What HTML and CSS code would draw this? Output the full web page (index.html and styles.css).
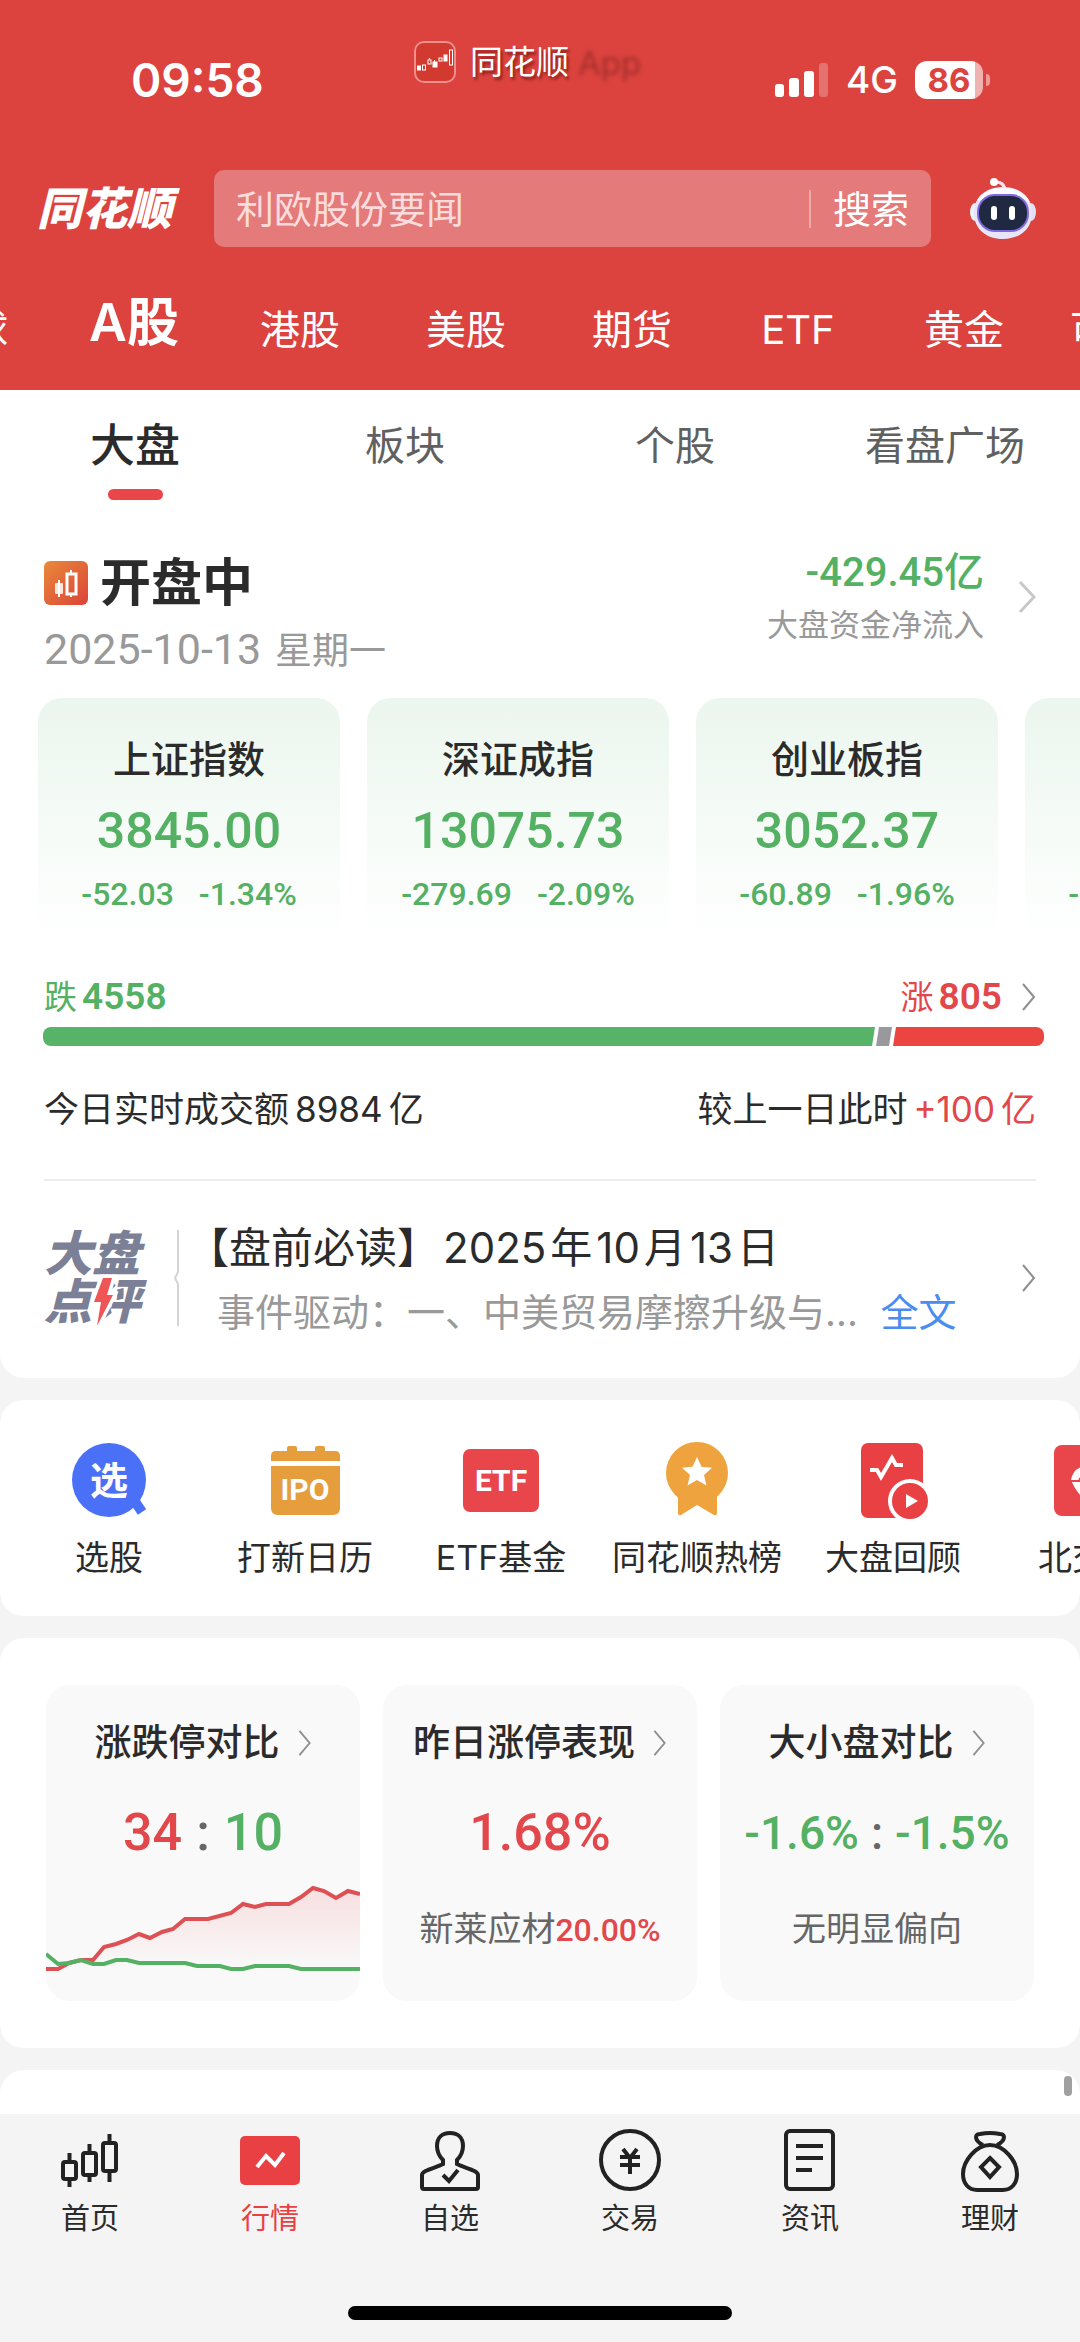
FILE: index.html
```html
<!DOCTYPE html>
<html lang="zh-CN">
<head>
    <meta charset="UTF-8">
    <meta name="viewport" content="width=device-width, initial-scale=1.0">
    <title>同花顺 行情</title>
    <link rel="stylesheet" href="styles.css">
</head>
<body>
<div class="app">
    <header class="header">
        <div class="statusbar">
            <span class="time">09:58</span>
            <div class="watermark">
                <svg width="42" height="42" viewBox="0 0 42 42">
                    <rect x="1" y="1" width="40" height="40" rx="9" fill="#d23a30" stroke="#ee8f8c" stroke-width="2"/>
                    <g fill="#fff" stroke="#fff" stroke-width="1">
                        <rect x="3.500" y="25" width="3" height="4"/>
                        <rect x="8.500" y="24" width="3" height="5" fill="none"/>
                        <rect x="14" y="19" width="3" height="4" fill="none"/>
                        <path d="M15.500 17v2M20.500 19v2"/>
                        <rect x="19" y="21" width="4" height="5"/>
                        <rect x="25" y="17" width="3" height="3" fill="none"/>
                        <rect x="30" y="14" width="3" height="6"/>
                        <rect x="35.500" y="9" width="3" height="15" fill="none"/>
                    </g>
                </svg>
                <span>同花顺<i class="faded">App</i></span>
            </div>
            <div class="status-icons">
                <svg width="54" height="36" viewBox="0 0 54 36" fill="#fff">
                    <rect x="0" y="22" width="9" height="13" rx="3"/>
                    <rect x="14" y="16" width="10" height="19" rx="3"/>
                    <rect x="29" y="9" width="10" height="26" rx="3"/>
                    <rect x="44" y="1" width="9" height="34" rx="3" opacity=".25"/>
                </svg>
                <span class="network">4G</span>
                <span class="battery">86</span>
            </div>
        </div>

        <div class="search-row">
            <span class="logo">同花顺</span>
            <form class="search">
                <input type="text" class="search-input" placeholder="利欧股份要闻" aria-label="搜索">
                <button type="button" class="search-btn">搜索</button>
            </form>
            <svg class="robot" width="66" height="62" viewBox="0 0 66 62">
                <path d="M24 4q10-1 11 8" fill="none" stroke="#f4e6f0" stroke-width="3"/>
                <circle cx="24" cy="4" r="4" fill="#fff"/>
                <ellipse cx="5" cy="34" rx="5" ry="9" fill="#eef0fa"/>
                <ellipse cx="61" cy="34" rx="5" ry="9" fill="#e3e0f5"/>
                <path d="M33 9C50 9 62 19 62 35S50 61 33 61 4 51 4 35 16 9 33 9z" fill="#e6e6f8"/>
                <path d="M33 10c14 0 24 6 27 15C50 15 16 15 6 25 9 16 19 10 33 10z" fill="#fafbff"/>
                <rect x="8" y="17" width="50" height="36" rx="17" fill="#1f2942" stroke="#8069dc" stroke-width="2"/>
                <rect x="21" y="28" width="6" height="14" rx="3" fill="#fff"/>
                <rect x="39" y="28" width="6" height="14" rx="3" fill="#fff"/>
            </svg>
        </div>

        <nav class="markets">
            <a href="#">全球</a>
            <a href="#" class="active">A股</a>
            <a href="#">港股</a>
            <a href="#">美股</a>
            <a href="#">期货</a>
            <a href="#">ETF</a>
            <a href="#">黄金</a>
            <a href="#">可转债</a>
        </nav>
    </header>

    <main class="content">
        <section class="panel overview">
            <nav class="subtabs">
                <a href="#" class="active">大盘</a>
                <a href="#">板块</a>
                <a href="#">个股</a>
                <a href="#">看盘广场</a>
            </nav>

            <div class="market-state">
                <div class="state-left">
                    <h1>
                        <svg width="44" height="44" viewBox="0 0 44 44">
                            <defs>
                                <linearGradient id="orange" x1="0" y1="0" x2="1" y2="1">
                                    <stop offset="0" stop-color="#e88a3a"/>
                                    <stop offset="1" stop-color="#dc4338"/>
                                </linearGradient>
                            </defs>
                            <rect width="44" height="44" rx="6" fill="url(#orange)"/>
                            <rect x="11" y="22" width="8" height="11" rx="1" fill="#fde6dc"/>
                            <path d="M15 19v17M27 9v3M27 33v3" stroke="#fff" stroke-width="2"/>
                            <rect x="23" y="13" width="9" height="20" fill="none" stroke="#fff" stroke-width="3"/>
                        </svg>
                        开盘中
                    </h1>
                    <p class="date"><span class="num">2025-10-13</span><span>星期一</span></p>
                </div>
                <a href="#" class="inflow">
                    <span>
                        <b class="num">-429.45亿</b>
                        <small>大盘资金净流入</small>
                    </span>
                    <svg width="18" height="34" viewBox="0 0 18 34" class="arrow light"><path d="M2 2l14 15L2 32"/></svg>
                </a>
            </div>

            <div class="indexes">
                <article class="index">
                    <h2>上证指数</h2>
                    <strong class="num">3845.00</strong>
                    <p class="num"><span>-52.03</span><span>-1.34%</span></p>
                </article>
                <article class="index">
                    <h2>深证成指</h2>
                    <strong class="num">13075.73</strong>
                    <p class="num"><span>-279.69</span><span>-2.09%</span></p>
                </article>
                <article class="index">
                    <h2>创业板指</h2>
                    <strong class="num">3052.37</strong>
                    <p class="num"><span>-60.89</span><span>-1.96%</span></p>
                </article>
                <article class="index">
                    <h2>科创50</h2>
                    <strong class="num">1422.49</strong>
                    <p class="num"><span>-30.19</span><span>-2.08%</span></p>
                </article>
            </div>

            <div class="breadth">
                <span class="down">跌<b class="num">4558</b></span>
                <a href="#" class="up">涨<b class="num">805</b>
                    <svg width="14" height="28" viewBox="0 0 14 28" class="arrow"><path d="M1 1l11 13L1 27"/></svg>
                </a>
            </div>
            <div class="breadth-bar">
                <svg width="100%" height="19" viewBox="0 0 1001 19" preserveAspectRatio="none">
                    <path d="M0 0h832l-3 19H0z" fill="#56b368"/>
                    <path d="M836 0h13l-3 19h-13z" fill="#99989d"/>
                    <path d="M853 0h148v19H850z" fill="#ea4540"/>
                </svg>
            </div>

            <div class="turnover">
                <span>今日实时成交额<i class="amount">8984</i>亿</span>
                <span>较上一日此时<em><i class="amount">+100</i>亿</em></span>
            </div>

            <a href="#" class="comment">
                <span class="comment-logo">
                    大盘<br>点<span class="bolt">评<svg width="20" height="48" viewBox="0 0 20 48"><path d="M10 0h9l-5 17h6L4 48l4-24H1z" fill="#ee5554" stroke="#fff" stroke-width="7" paint-order="stroke"/></svg></span>
                </span>
                <svg width="5" height="96" viewBox="0 0 5 96"><path d="M4 0v42L1 48l3 6v42" fill="none" stroke="#d4d4d4" stroke-width="2"/></svg>
                <span class="comment-body">
                    <span class="comment-title">【盘前必读】<i class="amount">2025</i>年<i class="amount">10</i>月<i class="amount">13</i>日</span>
                    <span class="comment-text">事件驱动：一、中美贸易摩擦升级与... <em>全文</em></span>
                </span>
                <svg width="14" height="28" viewBox="0 0 14 28" class="arrow"><path d="M1 1l11 13L1 27"/></svg>
            </a>
        </section>

        <section class="panel shortcuts">
            <a href="#">
                <svg width="80" height="80" viewBox="0 0 80 80">
                    <circle cx="40" cy="40" r="37" fill="#4a70f7"/>
                    <path d="M65 60l8 12" stroke="#4a70f7" stroke-width="10"/>
                    <text x="40" y="54" class="icon-text" font-size="38">选</text>
                </svg>
                选股
            </a>
            <a href="#">
                <svg width="80" height="80" viewBox="0 0 80 80">
                    <path d="M6 21v-5q0-5 5-5h11V8q0-2 2-2h6q2 0 2 2v3h18V8q0-2 2-2h6q2 0 2 2v3h10q5 0 5 5v5z" fill="#e69d3c"/>
                    <path d="M6 26h69v42q0 7-7 7H13q-7 0-7-7z" fill="#e69d3c"/>
                    <text x="40" y="60" class="icon-text" font-size="30">IPO</text>
                </svg>
                打新日历
            </a>
            <a href="#">
                <svg width="80" height="80" viewBox="0 0 80 80">
                    <rect x="2" y="9" width="76" height="63" rx="7" fill="#e8464b"/>
                    <text x="40" y="51" class="icon-text" font-size="30">ETF</text>
                </svg>
                ETF基金
            </a>
            <a href="#">
                <svg width="80" height="80" viewBox="0 0 80 80">
                    <circle cx="40" cy="33" r="31" fill="#eea33e"/>
                    <path d="M21 50h39v23q0 3-3 2L40 65 24 75q-3 1-3-2z" fill="#eea33e"/>
                    <path d="M40 17l4.500 9.700 10.500 1-8 7.300 2.500 10.500L40 40l-9.500 5.500L33 35l-8-7.300 10.500-1z" fill="#fff"/>
                </svg>
                同花顺热榜
            </a>
            <a href="#">
                <svg width="80" height="80" viewBox="0 0 80 80">
                    <rect x="8" y="3" width="62" height="75" rx="7" fill="#e84043"/>
                    <path d="M17 30h7l4 7L39 18l4 7h7" fill="none" stroke="#fff" stroke-width="4"/>
                    <circle cx="57" cy="61" r="22" fill="#fff"/>
                    <circle cx="57" cy="61" r="18" fill="#e84043"/>
                    <path d="M53 54l12 7-12 7z" fill="#fff"/>
                </svg>
                大盘回顾
            </a>
            <a href="#">
                <svg width="80" height="80" viewBox="0 0 80 80">
                    <rect x="5" y="5" width="70" height="71" rx="8" fill="#e8464b"/>
                    <path d="M22 40q2-12 14-14h16l8 14-19 22q-12-5-19-22z" fill="#fff"/>
                    <path d="M22 41h10M30 40l6-7" stroke="#e8464b" stroke-width="2"/>
                </svg>
                北交所
            </a>
        </section>

        <section class="panel compare">
            <a href="#" class="card">
                <h2>涨跌停对比<svg width="14" height="26" viewBox="0 0 14 28" class="arrow"><path d="M1 1l11 13L1 27"/></svg></h2>
                <div class="value num"><span class="up">34</span><i>:</i><span class="down">10</span></div>
                <svg class="chart" viewBox="0 0 314 120">
                    <defs>
                        <linearGradient id="fade" x1="0" y1="0" x2="0" y2="1">
                            <stop offset="0" stop-color="#f7dfe0"/>
                            <stop offset="1" stop-color="#f9f9f9"/>
                        </linearGradient>
                    </defs>
                    <path d="M0 88H12L23 82 35 79H47L58 66 70 63 81 59 93 53 104 57 116 51 127 48 139 38H162L185 32 197 23 209 26 220 23H243L255 16 267 7 278 10 290 17 302 10 314 13V88z" fill="url(#fade)"/>
                    <path d="M0 88H12L23 82 35 79H47L58 66 70 63 81 59 93 53 104 57 116 51 127 48 139 38H162L185 32 197 23 209 26 220 23H243L255 16 267 7 278 10 290 17 302 10 314 13" fill="none" stroke="#dd5054" stroke-width="4"/>
                    <path d="M0 73L12 83 23 82 35 79 47 83H58L70 79H81L93 82H139L151 85H174L185 88H197L209 85H243L255 88H314" fill="none" stroke="#54b163" stroke-width="4"/>
                </svg>
            </a>
            <a href="#" class="card">
                <h2>昨日涨停表现<svg width="14" height="26" viewBox="0 0 14 28" class="arrow"><path d="M1 1l11 13L1 27"/></svg></h2>
                <div class="value num"><span class="up">1.68%</span></div>
                <p>新莱应材<b class="num up">20.00%</b></p>
            </a>
            <a href="#" class="card">
                <h2>大小盘对比<svg width="14" height="26" viewBox="0 0 14 28" class="arrow"><path d="M1 1l11 13L1 27"/></svg></h2>
                <div class="value small num"><span class="down">-1.6%</span><i>:</i><span class="down">-1.5%</span></div>
                <p>无明显偏向</p>
            </a>
        </section>

        <section class="panel next">
            <span class="scroll-thumb"></span>
        </section>
    </main>

    <footer class="tabbar">
        <nav>
            <a href="#">
                <svg width="64" height="64" viewBox="0 0 64 64">
                    <rect x="5" y="34" width="13" height="17" rx="2"/>
                    <rect x="25" y="25" width="13" height="22" rx="2"/>
                    <rect x="45" y="15" width="13" height="28" rx="2"/>
                    <path d="M11.500 25v9M11.500 51v8M31.500 16v9M31.500 47v7M51.500 6v9M51.500 43v11"/>
                </svg>
                首页
            </a>
            <a href="#" class="active">
                <svg width="64" height="64" viewBox="0 0 64 64">
                    <rect x="2" y="8" width="60" height="49" rx="5" class="solid"/>
                    <path d="M19 39l9-11 9 9 9-12" class="white"/>
                </svg>
                行情
            </a>
            <a href="#">
                <svg width="64" height="64" viewBox="0 0 64 64">
                    <path d="M32 5c8 0 13 5 13 13 0 7-3 11-6 14v4c7 4 21 6 21 11v12q0 2-2 2H6q-2 0-2-2V47c0-5 14-7 21-11v-4c-3-3-6-7-6-14 0-8 5-13 13-13z"/>
                    <path d="M25 47l6 6 9-11"/>
                </svg>
                自选
            </a>
            <a href="#">
                <svg width="64" height="64" viewBox="0 0 64 64">
                    <circle cx="32" cy="32" r="29"/>
                    <path d="M25 21l7 9 7-9M22 29h20M22 37h20M32 30v16"/>
                </svg>
                交易
            </a>
            <a href="#">
                <svg width="64" height="64" viewBox="0 0 64 64">
                    <rect x="8" y="3" width="47" height="58" rx="4"/>
                    <path d="M18 18h27M18 30h27M18 42h16"/>
                </svg>
                资讯
            </a>
            <a href="#">
                <svg width="64" height="64" viewBox="0 0 64 64">
                    <path d="M25 17c-4-2-7-5-7-8 0-2 2-3 4-3q10-2 20 0c2 0 4 1 4 3 0 3-3 6-7 8"/>
                    <path d="M32 17c14 0 27 16 27 29 0 10-6 16-14 16H19C11 62 5 56 5 46c0-13 13-29 27-29z"/>
                    <path d="M32 30l9 9-9 10-9-10z"/>
                </svg>
                理财
            </a>
        </nav>
        <div class="home-indicator"></div>
    </footer>
</div>
</body>
</html>
```
FILE: styles.css
```css
* {
    box-sizing: border-box;
}
body {
    margin: 0;
    background: #f4f4f4;
    color: #2b2b2b;
    font-family: Inter, "Noto Sans CJK SC", sans-serif;
}
a {
    color: inherit;
    text-decoration: none;
}
h1, h2, p {
    margin: 0;
}
em, i {
    font-style: normal;
}
svg {
    display: block;
    flex: none;
}
.num {
    font-family: Roboto, "Noto Sans CJK SC", sans-serif;
    font-weight: 500;
}
.amount {
    margin: 0 4px;
}
.up {
    color: #e2484b;
}
.down {
    color: #54b163;
}
.arrow {
    fill: none;
    stroke: #8f8f8f;
    stroke-width: 2;
}
.arrow.light {
    stroke: #c8c8c8;
    stroke-width: 3;
}
.app {
    display: flex;
    flex-direction: column;
    min-height: 100vh;
    overflow: hidden;
}

/* header */
.header {
    background: #dc433f;
    color: #fff;
    padding-bottom: 30px;
}
.statusbar {
    position: relative;
    display: flex;
    justify-content: space-between;
    align-items: center;
    padding: 52px 97px 0 131px;
    line-height: 56px;
}
.time {
    font-size: 46px;
    font-weight: 600;
}
.watermark {
    position: absolute;
    top: 41px;
    left: 414px;
    display: flex;
    gap: 14px;
    font-size: 33px;
    line-height: 42px;
    text-shadow: 2px 3px 3px #8a1d1a;
}
.faded {
    margin-left: 8px;
    color: transparent;
    text-shadow: 1px 1px 4px #a3302c;
}
.status-icons {
    display: flex;
    align-items: center;
    gap: 17px;
}
.network {
    font-size: 37px;
    font-weight: 500;
}
.battery {
    position: relative;
    width: 68px;
    border-radius: 12px;
    background: linear-gradient(90deg, #fff 88%, #f0b3b1 88%);
    color: #dc433f;
    font-size: 33px;
    font-weight: 700;
    line-height: 38px;
    text-align: center;
}
.battery::after {
    content: "";
    position: absolute;
    top: 13px;
    right: -7px;
    width: 4px;
    height: 12px;
    border-radius: 0 4px 4px 0;
    background: #ee9c99;
}
.search-row {
    display: flex;
    align-items: center;
    padding: 62px 44px 0 37px;
}
.logo {
    width: 138px;
    font-size: 45px;
    font-weight: 900;
    font-style: italic;
    line-height: 77px;
    white-space: nowrap;
}
.search {
    flex: 1;
    display: flex;
    align-items: center;
    min-width: 0;
    height: 77px;
    margin: 0 39px;
    border-radius: 10px;
    background: #e47a79;
}
.search-input {
    flex: 1;
    min-width: 0;
    padding: 0 22px;
    border: 0;
    background: none;
    color: #fff;
    font: inherit;
    font-size: 38px;
}
.search-input::placeholder {
    color: #fbdcdc;
    opacity: 1;
}
.search-btn {
    padding: 0 22px;
    border: 0;
    border-left: 2px solid #f0a9a8;
    background: none;
    color: #fff;
    font: inherit;
    font-size: 38px;
    line-height: 38px;
}
.markets {
    display: flex;
    align-items: flex-start;
    height: 60px;
    margin: 53px 0 0 -115px;
    font-size: 40px;
    line-height: 60px;
}
.markets a {
    flex: none;
    width: 166px;
    text-align: center;
}
.markets .active {
    font-size: 52px;
    font-weight: 600;
    line-height: 46px;
}

/* content */
.content {
    flex: 1;
    display: flex;
    flex-direction: column;
    gap: 22px;
}
.panel {
    border-radius: 24px;
    background: #fff;
}
.overview {
    border-radius: 0 0 24px 24px;
    padding-bottom: 42px;
}
.subtabs {
    display: grid;
    grid-template-columns: repeat(4, 1fr);
    padding-top: 26px;
    color: #606060;
    font-size: 40px;
    line-height: 60px;
    text-align: center;
}
.subtabs .active {
    color: #2b2b2b;
    font-size: 45px;
    font-weight: 500;
}
.subtabs .active::after {
    content: "";
    display: block;
    width: 55px;
    height: 11px;
    margin: 13px auto 0;
    border-radius: 6px;
    background: #e8464b;
}
.market-state {
    display: flex;
    justify-content: space-between;
    padding: 49px 44px 0;
}
.state-left {
    padding-top: 6px;
}
.state-left h1 {
    display: flex;
    align-items: center;
    gap: 12px;
    font-size: 51px;
    font-weight: 700;
    line-height: 56px;
}
.date {
    display: flex;
    align-items: baseline;
    gap: 14px;
    margin-top: 14px;
    color: #999;
    font-size: 37px;
    line-height: 48px;
}
.date .num {
    font-size: 43px;
    font-weight: 400;
}
.inflow {
    display: flex;
    align-items: center;
    gap: 34px;
    height: 96px;
    text-align: right;
}
.inflow b {
    display: block;
    color: #54b163;
    font-size: 40px;
    line-height: 48px;
}
.inflow small {
    display: block;
    margin-top: 8px;
    color: #999;
    font-size: 31px;
    line-height: 40px;
}
.indexes {
    display: flex;
    gap: 27px;
    margin-top: 23px;
    padding-left: 38px;
    overflow: hidden;
}
.index {
    flex: none;
    width: 302px;
    padding: 35px 0 26px;
    border-radius: 24px;
    background: linear-gradient(#ebf6ee, #fff);
    text-align: center;
}
.index h2 {
    font-size: 38px;
    font-weight: 500;
    line-height: 52px;
}
.index strong {
    display: block;
    margin-top: 14px;
    color: #54b163;
    font-size: 50px;
    line-height: 64px;
}
.index p {
    display: flex;
    justify-content: center;
    gap: 25px;
    margin-top: 11px;
    color: #54b163;
    font-size: 32px;
    line-height: 40px;
}
.breadth {
    display: flex;
    justify-content: space-between;
    padding: 35px 44px 0;
    font-size: 33px;
    line-height: 44px;
}
.breadth b {
    margin-left: 5px;
    font-size: 37px;
    font-weight: 600;
}
.breadth a {
    display: flex;
    align-items: center;
}
.breadth .arrow {
    margin-left: 20px;
}
.breadth-bar {
    margin: 8px 36px 0 43px;
    border-radius: 8px;
    overflow: hidden;
}
.turnover {
    display: flex;
    justify-content: space-between;
    margin: 39px 44px 0;
    padding-bottom: 46px;
    border-bottom: 2px solid #ececec;
    font-size: 35px;
    line-height: 48px;
}
.turnover em {
    color: #e2484b;
}
.turnover .amount {
    margin: 0 6px;
}
.comment {
    display: flex;
    align-items: center;
    padding: 39px 44px 0;
}
.comment-logo {
    width: 106px;
    margin-right: 24px;
    color: #7b8096;
    font-size: 48px;
    font-weight: 900;
    font-style: italic;
    line-height: 48px;
    white-space: nowrap;
}
/* the bolt stands in for the left part of the character */
.bolt {
    position: relative;
}
.bolt svg {
    position: absolute;
    top: 6px;
    left: 1px;
    overflow: visible;
}
.comment-body {
    flex: 1;
    min-width: 0;
    padding-left: 8px;
}
.comment-title {
    display: block;
    font-size: 42px;
    line-height: 56px;
}
.comment-text {
    display: block;
    margin-top: 12px;
    padding-left: 30px;
    color: #999;
    font-size: 38px;
    line-height: 48px;
    white-space: nowrap;
}
.comment-text em {
    margin-left: 12px;
    color: #4a8df0;
}

/* shortcuts */
.shortcuts {
    display: flex;
    padding: 40px 0 36px 11px;
    overflow: hidden;
    font-size: 34px;
    line-height: 44px;
}
.shortcuts a {
    flex: none;
    display: flex;
    flex-direction: column;
    align-items: center;
    gap: 16px;
    width: 196px;
    white-space: nowrap;
}
.icon-text {
    fill: #fff;
    font-family: Roboto, "Noto Sans CJK SC", sans-serif;
    font-weight: 700;
    text-anchor: middle;
}

/* compare cards */
.compare {
    display: grid;
    grid-template-columns: repeat(3, 1fr);
    gap: 23px;
    padding: 47px 46px;
}
.card {
    height: 316px;
    padding-top: 32px;
    border-radius: 24px;
    background: #f9f9f9;
    overflow: hidden;
    text-align: center;
}
.card h2 {
    display: flex;
    justify-content: center;
    align-items: center;
    gap: 18px;
    font-size: 37px;
    font-weight: 500;
    line-height: 52px;
}
.value {
    display: flex;
    justify-content: center;
    gap: 14px;
    margin-top: 32px;
    font-size: 52px;
    line-height: 64px;
}
.value.small {
    gap: 12px;
    font-size: 46px;
}
.value i {
    color: #666;
}
.card p {
    margin-top: 42px;
    color: #666;
    font-size: 34px;
    line-height: 44px;
}
.card p b {
    font-size: 32px;
}
.chart {
    width: 100%;
    margin-top: 16px;
}
.next {
    position: relative;
    flex: 1;
    min-height: 44px;
    border-radius: 24px 24px 0 0;
}
.scroll-thumb {
    position: absolute;
    top: 6px;
    right: 8px;
    width: 8px;
    height: 20px;
    border-radius: 4px;
    background: #a0a0a0;
}

/* bottom tabs */
.tabbar {
    padding: 14px 0 22px;
    background: #f4f4f4;
}
.tabbar nav {
    display: grid;
    grid-template-columns: repeat(6, 1fr);
    font-size: 29px;
    line-height: 40px;
}
.tabbar a {
    display: flex;
    flex-direction: column;
    align-items: center;
    gap: 7px;
}
.tabbar .active {
    color: #e84043;
}
.tabbar svg {
    fill: none;
    stroke: #222;
    stroke-width: 4;
}
.tabbar .solid {
    fill: #e84043;
    stroke: none;
}
.tabbar .white {
    stroke: #fff;
}
.home-indicator {
    width: 384px;
    height: 14px;
    margin: 67px auto 0;
    border-radius: 7px;
    background: #000;
}
```
